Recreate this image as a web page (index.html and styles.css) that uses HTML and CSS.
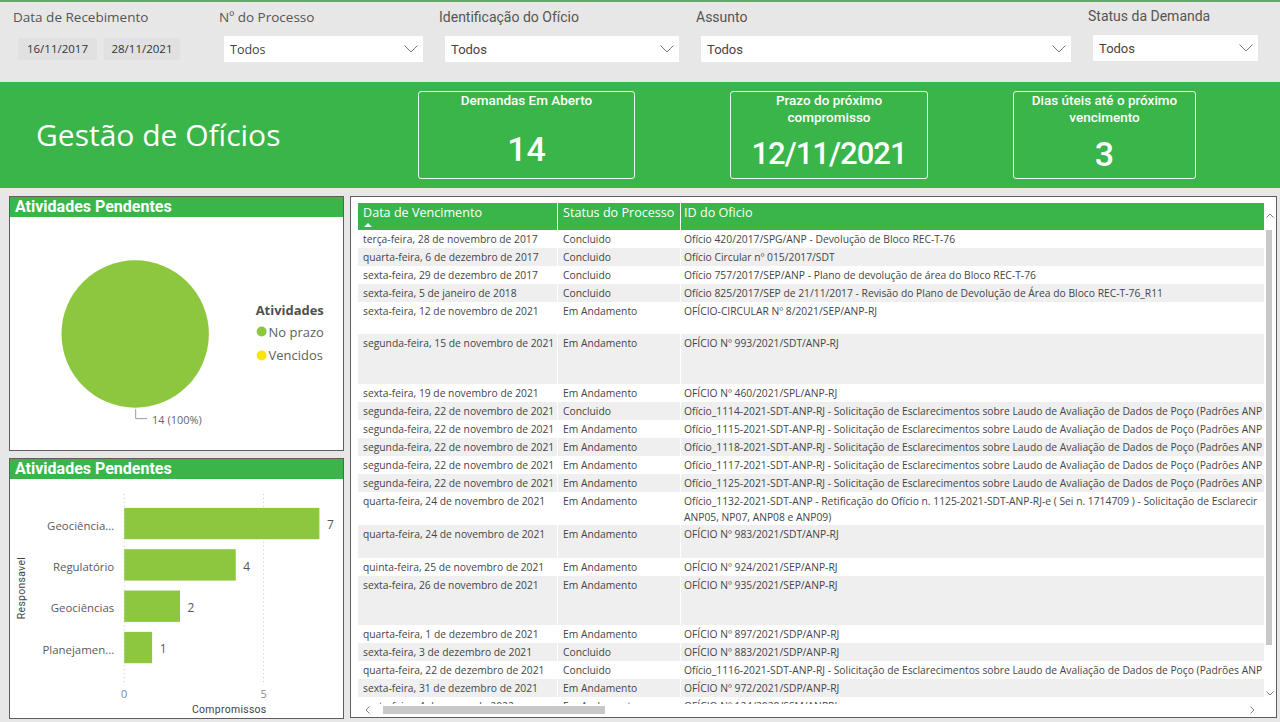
FILE: index.html
```html
<!DOCTYPE html>
<html lang="pt-BR">
<head>
<meta charset="utf-8">
<title>Gestão de Ofícios</title>
<link rel="stylesheet" href="styles.css">
</head>
<body>
<div class="page">
  <header class="filters">
    <div class="filter f-date">
      <div class="flabel seg">Data de Recebimento</div>
      <div class="dates"><span class="datebox d1">16/11/2017</span><span class="datebox d2">28/11/2021</span></div>
    </div>
    <div class="filter f-proc">
      <div class="flabel seg">Nº do Processo</div>
      <div class="dropdown seg"><span>Todos</span><svg class="chev" width="14" height="8" viewBox="0 0 14 8"><polyline points="0.5,0.5 7,7 13.5,0.5"/></svg></div>
    </div>
    <div class="filter f-ident">
      <div class="flabel din">Identificação do Ofício</div>
      <div class="dropdown din"><span>Todos</span><svg class="chev" width="14" height="8" viewBox="0 0 14 8"><polyline points="0.5,0.5 7,7 13.5,0.5"/></svg></div>
    </div>
    <div class="filter f-assunto">
      <div class="flabel din">Assunto</div>
      <div class="dropdown din"><span>Todos</span><svg class="chev" width="14" height="8" viewBox="0 0 14 8"><polyline points="0.5,0.5 7,7 13.5,0.5"/></svg></div>
    </div>
    <div class="filter f-status">
      <div class="flabel din">Status da Demanda</div>
      <div class="dropdown din"><span>Todos</span><svg class="chev" width="14" height="8" viewBox="0 0 14 8"><polyline points="0.5,0.5 7,7 13.5,0.5"/></svg></div>
    </div>
  </header>

  <section class="banner">
    <h1 class="title">Gestão de Ofícios</h1>
    <div class="card c1">
      <div class="card-title">Demandas Em Aberto</div>
      <div class="card-value">14</div>
    </div>
    <div class="card c2">
      <div class="card-title">Prazo do próximo<br>compromisso</div>
      <div class="card-value">12/11/2021</div>
    </div>
    <div class="card c3">
      <div class="card-title">Dias úteis até o próximo<br>vencimento</div>
      <div class="card-value">3</div>
    </div>
  </section>

  <main class="content">
    <div class="left-col">
      <section class="panel pie-panel">
        <div class="panel-head">Atividades Pendentes</div>
        <svg class="chart" width="333" height="234" viewBox="0 0 333 234">
          <circle cx="125" cy="117.5" r="74" fill="#8dc63f"/>
          <polyline points="125.5,193 125.5,202.5 137,202.5" fill="none" stroke="#9a9a9a" stroke-width="1"/>
          <text x="142" y="203" class="pie-lbl">14 (100%)</text>
          <text x="246" y="93" class="leg-title">Atividades</text>
          <circle cx="252" cy="115" r="5" fill="#8dc63f"/>
          <text x="259" y="115" class="leg">No prazo</text>
          <circle cx="252" cy="139" r="5" fill="#f7e600"/>
          <text x="259" y="139" class="leg">Vencidos</text>
        </svg>
      </section>
      <section class="panel bar-panel">
        <div class="panel-head">Atividades Pendentes</div>
        <svg class="chart" width="333" height="240" viewBox="0 0 333 240">
          <line x1="114" y1="15" x2="114" y2="206" class="grid"/>
          <line x1="254" y1="15" x2="254" y2="206" class="grid"/>
          <rect x="114" y="29" width="196" height="31.5" fill="#8dc63f"/>
          <rect x="114" y="70.5" width="112" height="31.5" fill="#8dc63f"/>
          <rect x="114" y="112" width="56" height="31.5" fill="#8dc63f"/>
          <rect x="114" y="153.5" width="28" height="31.5" fill="#8dc63f"/>
          <text x="321" y="46" class="val">7</text>
          <text x="237" y="87.5" class="val">4</text>
          <text x="181" y="129" class="val">2</text>
          <text x="153" y="170.5" class="val">1</text>
          <text x="104" y="46.5" class="cat">Geociência...</text>
          <text x="104" y="88" class="cat">Regulatório</text>
          <text x="104" y="129.5" class="cat">Geociências</text>
          <text x="104" y="171" class="cat">Planejamen...</text>
          <text x="114" y="215" class="tick">0</text>
          <text x="254" y="215" class="tick">5</text>
          <text x="219.5" y="231" class="axis">Compromissos</text>
          <text x="0" y="0" class="axis" transform="translate(11 109.5) rotate(-90)">Responsavel</text>
        </svg>
      </section>
    </div>

    <section class="table-panel">
      <div class="table-area">
        <table class="grid-table">
          <colgroup><col class="w1"><col class="w2"><col class="w3"></colgroup>
          <thead>
            <tr><th class="sorted">Data de Vencimento</th><th>Status do Processo</th><th>ID do Oficio</th></tr>
          </thead>
          <tbody>
            <tr><td>terça-feira, 28 de novembro de 2017</td><td>Concluido</td><td>Ofício 420/2017/SPG/ANP - Devolução de Bloco REC-T-76</td></tr>
            <tr class="alt"><td>quarta-feira, 6 de dezembro de 2017</td><td>Concluido</td><td>Ofício Circular nº 015/2017/SDT</td></tr>
            <tr><td>sexta-feira, 29 de dezembro de 2017</td><td>Concluido</td><td>Ofício 757/2017/SEP/ANP - Plano de devolução de área do Bloco REC-T-76</td></tr>
            <tr class="alt"><td>sexta-feira, 5 de janeiro de 2018</td><td>Concluido</td><td>Ofício 825/2017/SEP de 21/11/2017 - Revisão do Plano de Devolução de Área do Bloco REC-T-76_R11</td></tr>
            <tr class="h32"><td>sexta-feira, 12 de novembro de 2021</td><td>Em Andamento</td><td>OFÍCIO-CIRCULAR Nº 8/2021/SEP/ANP-RJ</td></tr>
            <tr class="alt h50"><td>segunda-feira, 15 de novembro de 2021</td><td>Em Andamento</td><td>OFÍCIO Nº 993/2021/SDT/ANP-RJ</td></tr>
            <tr><td>sexta-feira, 19 de novembro de 2021</td><td>Em Andamento</td><td>OFÍCIO Nº 460/2021/SPL/ANP-RJ</td></tr>
            <tr class="alt"><td>segunda-feira, 22 de novembro de 2021</td><td>Concluido</td><td>Ofício_1114-2021-SDT-ANP-RJ - Solicitação de Esclarecimentos sobre Laudo de Avaliação de Dados de Poço (Padrões ANP</td></tr>
            <tr><td>segunda-feira, 22 de novembro de 2021</td><td>Em Andamento</td><td>Ofício_1115-2021-SDT-ANP-RJ - Solicitação de Esclarecimentos sobre Laudo de Avaliação de Dados de Poço (Padrões ANP</td></tr>
            <tr class="alt"><td>segunda-feira, 22 de novembro de 2021</td><td>Em Andamento</td><td>Ofício_1118-2021-SDT-ANP-RJ - Solicitação de Esclarecimentos sobre Laudo de Avaliação de Dados de Poço (Padrões ANP</td></tr>
            <tr><td>segunda-feira, 22 de novembro de 2021</td><td>Em Andamento</td><td>Ofício_1117-2021-SDT-ANP-RJ - Solicitação de Esclarecimentos sobre Laudo de Avaliação de Dados de Poço (Padrões ANP</td></tr>
            <tr class="alt"><td>segunda-feira, 22 de novembro de 2021</td><td>Em Andamento</td><td>Ofício_1125-2021-SDT-ANP-RJ - Solicitação de Esclarecimentos sobre Laudo de Avaliação de Dados de Poço (Padrões ANP</td></tr>
            <tr class="h33 two"><td>quarta-feira, 24 de novembro de 2021</td><td>Em Andamento</td><td>Ofício_1132-2021-SDT-ANP - Retificação do Ofício n. 1125-2021-SDT-ANP-RJ-e ( Sei n. 1714709 ) - Solicitação de Esclarecir<br>ANP05, NP07, ANP08 e ANP09)</td></tr>
            <tr class="alt h33"><td>quarta-feira, 24 de novembro de 2021</td><td>Em Andamento</td><td>OFÍCIO Nº 983/2021/SDT/ANP-RJ</td></tr>
            <tr><td>quinta-feira, 25 de novembro de 2021</td><td>Em Andamento</td><td>OFÍCIO Nº 924/2021/SEP/ANP-RJ</td></tr>
            <tr class="alt h49"><td>sexta-feira, 26 de novembro de 2021</td><td>Em Andamento</td><td>OFÍCIO Nº 935/2021/SEP/ANP-RJ</td></tr>
            <tr><td>quarta-feira, 1 de dezembro de 2021</td><td>Em Andamento</td><td>OFÍCIO Nº 897/2021/SDP/ANP-RJ</td></tr>
            <tr class="alt"><td>sexta-feira, 3 de dezembro de 2021</td><td>Concluido</td><td>OFÍCIO Nº 883/2021/SDP/ANP-RJ</td></tr>
            <tr><td>quarta-feira, 22 de dezembro de 2021</td><td>Concluido</td><td>Ofício_1116-2021-SDT-ANP-RJ - Solicitação de Esclarecimentos sobre Laudo de Avaliação de Dados de Poço (Padrões ANP</td></tr>
            <tr class="alt"><td>sexta-feira, 31 de dezembro de 2021</td><td>Em Andamento</td><td>OFÍCIO Nº 972/2021/SDP/ANP-RJ</td></tr>
            <tr><td>sexta-feira, 4 de março de 2022</td><td>Em Andamento</td><td>OFÍCIO Nº 124/2020/SSM/ANPRJ</td></tr>
          </tbody>
        </table>
      </div>
      <div class="vscroll">
        <svg class="caret up" width="8" height="5" viewBox="0 0 8 5"><polyline points="0.5,4.5 4,1 7.5,4.5"/></svg>
        <div class="vthumb"></div>
        <svg class="caret down" width="8" height="5" viewBox="0 0 8 5"><polyline points="0.5,0.5 4,4 7.5,0.5"/></svg>
      </div>
      <div class="hscroll">
        <svg class="caret left" width="5" height="8" viewBox="0 0 5 8"><polyline points="4.5,0.5 1,4 4.5,7.5"/></svg>
        <div class="hthumb"></div>
        <svg class="caret right" width="5" height="8" viewBox="0 0 5 8"><polyline points="0.5,0.5 4,4 0.5,7.5"/></svg>
      </div>
    </section>
  </main>
</div>
</body>
</html>
```

FILE: styles.css
```css
* { box-sizing: border-box; }
html, body { margin: 0; padding: 0; }
body {
  width: 1280px;
  height: 722px;
  overflow: hidden;
  background: #e7e7e7;
  font-family: "Open Sans", "Noto Sans", Arial, sans-serif;
  color: #444;
}
.page {
  display: flex;
  flex-direction: column;
  height: 722px;
  border-top: 2px solid #64a96a;
}

/* ---------- filters ---------- */
.filters {
  height: 78px;
  flex: none;
  display: grid;
  grid-template-columns: 206px 220px 257px 392px 170px;
  padding-left: 13px;
  background: #e7e7e7;
}
.filter { display: flex; flex-direction: column; }
.flabel {
  margin-top: 5px;
  height: 20px;
  line-height: 20px;
  color: #555;
  white-space: nowrap;
}
.seg { font-family: "Open Sans", "Noto Sans", sans-serif; }
.din { font-family: Roboto, "Noto Sans", sans-serif; }
.flabel.seg { font-size: 13.5px; }
.flabel.din { font-size: 14px; }
.f-status .flabel { margin-top: 4px; }

.dates { display: flex; gap: 7px; margin-top: 11px; margin-left: 5px; }
.datebox {
  height: 22px;
  line-height: 22px;
  text-align: center;
  background: #e1e1e1;
  font-size: 11.5px;
  color: #333;
}
.datebox.d1 { width: 79px; }
.datebox.d2 { width: 76px; }

.dropdown {
  margin-top: 9px;
  height: 26px;
  background: #fff;
  display: flex;
  align-items: center;
  justify-content: space-between;
  padding: 0 5px 0 6px;
  font-size: 13px;
  color: #444;
}
.dropdown.seg { font-size: 12.5px; }
.chev { fill: none; stroke: #7a7a7a; stroke-width: 1; }
.f-proc .dropdown { margin-left: 5px; width: 199px; }
.f-ident .dropdown { margin-left: 6px; width: 234px; }
.f-assunto .dropdown { margin-left: 5px; width: 370px; }
.f-status .dropdown { margin-left: 5px; width: 165px; }

/* ---------- banner ---------- */
.banner {
  margin-top: 2px;
  height: 106px;
  flex: none;
  background: #39b54a;
  display: flex;
  align-items: center;
}
.title {
  margin: 0;
  width: 418px;
  padding-left: 36px;
  font-family: "Open Sans", "Noto Sans", sans-serif;
  font-weight: 400;
  font-size: 30px;
  line-height: 40px;
  color: #fff;
  white-space: nowrap;
}
.card {
  height: 88px;
  border: 1px solid rgba(255, 255, 255, 0.9);
  border-radius: 3px;
  color: #fff;
  font-family: Roboto, "Noto Sans", sans-serif;
  display: flex;
  flex-direction: column;
  align-items: center;
  text-align: center;
}
.card-title { font-size: 13.5px; font-weight: 500; line-height: 17px; }
.card-value { font-size: 34px; line-height: 40px; font-weight: 500; }
.c1 { width: 217px; }
.c1 .card-value { margin-top: 20px; }
.c2 { width: 198px; margin-left: 95px; }
.c2 .card-value { margin-top: 8px; font-size: 31px; letter-spacing: -1px; }
.c3 { width: 183px; margin-left: 85px; }
.c3 .card-value { margin-top: 8px; }

/* ---------- content ---------- */
.content {
  flex: 1;
  display: flex;
  gap: 6px;
  padding: 8px 4px 3px 9px;
}
.left-col {
  width: 335px;
  display: flex;
  flex-direction: column;
  gap: 7px;
}
.panel {
  background: #fff;
  border: 1px solid #5e5e5e;
  display: flex;
  flex-direction: column;
  overflow: hidden;
}
.pie-panel { height: 255px; }
.bar-panel { height: 261px; }
.panel-head {
  height: 20px;
  flex: none;
  background: #39b54a;
  color: #fff;
  font-family: Roboto, "Noto Sans", sans-serif;
  font-weight: 700;
  font-size: 16px;
  line-height: 20px;
  padding-left: 5px;
}
.chart { display: block; }
.chart text { dominant-baseline: central; }
.pie-lbl { font-family: "Open Sans", sans-serif; font-size: 11px; fill: #666; }
.leg-title { font-family: "Open Sans", sans-serif; font-size: 13px; font-weight: 700; fill: #505050; }
.leg { font-family: "Open Sans", sans-serif; font-size: 13px; fill: #606060; }
.grid { stroke: #c4c4c4; stroke-width: 1; stroke-dasharray: 1 3; }
.val { font-family: "Open Sans", sans-serif; font-size: 12px; fill: #555; text-anchor: middle; }
.cat { font-family: "Open Sans", sans-serif; font-size: 11.5px; fill: #5a5a5a; text-anchor: end; }
.tick { font-family: "Open Sans", sans-serif; font-size: 11px; fill: #888; text-anchor: middle; }
.axis { font-family: Roboto, sans-serif; font-size: 10.5px; fill: #444; text-anchor: middle; letter-spacing: 0.3px; }

/* ---------- table ---------- */
.table-panel {
  width: 927px;
  height: 522px;
  background: #fff;
  border: 1px solid #5e5e5e;
  padding: 6px 0 0 7px;
  display: grid;
  grid-template-columns: 906px 12px;
  grid-template-rows: 501px 12px;
}
.table-area { overflow: hidden; }
.grid-table {
  border-collapse: separate;
  border-spacing: 0;
  table-layout: fixed;
  width: 1500px;
}
.w1 { width: 199px; }
.w2 { width: 123px; }
.w3 { width: 1178px; }
.grid-table th {
  height: 27px;
  background: #39b54a;
  color: #fff;
  font-weight: 400;
  font-size: 12.6px;
  line-height: 18px;
  text-align: left;
  vertical-align: top;
  padding: 1px 4px 0 5px;
  white-space: nowrap;
}
.grid-table th.sorted::after {
  content: "";
  display: block;
  width: 0;
  height: 0;
  margin: 1px 0 0 1px;
  border-left: 4px solid transparent;
  border-right: 4px solid transparent;
  border-bottom: 4px solid #fff;
}
.grid-table th + th,
.grid-table td + td { border-left: 1px solid #fff; }
.grid-table th:last-child,
.grid-table td:last-child { padding-left: 3px; }
.grid-table tr { height: 18px; }
.grid-table td {
  font-size: 10.3px;
  line-height: 16px;
  color: #454545;
  padding: 1px 4px 0 5px;
  vertical-align: top;
  white-space: nowrap;
  overflow: hidden;
}
.grid-table tr.alt { background: #efefef; }
.grid-table tr.h32 { height: 32px; }
.grid-table tr.h33 { height: 33px; }
.grid-table tr.h49 { height: 49px; }
.grid-table tr.h50 { height: 50px; }
.grid-table tr.two td { line-height: 15.5px; padding-top: 2px; }

.vscroll {
  display: flex;
  flex-direction: column;
  align-items: center;
}
.caret { fill: none; stroke: #808080; stroke-width: 1; flex: none; }
.caret.up { margin-top: 10px; }
.vthumb {
  width: 6px;
  height: 415px;
  margin-top: 12px;
  margin-right: 2px;
  background: #c8c8c8;
}
.caret.down { margin-top: auto; margin-bottom: 8px; }

.hscroll {
  grid-column: 1 / span 2;
  display: flex;
  align-items: center;
}
.caret.left { margin-left: 7px; }
.hthumb {
  width: 222px;
  height: 8px;
  margin-left: 13px;
  background: #c8c8c8;
}
.caret.right { margin-left: auto; margin-right: 21px; }
```
